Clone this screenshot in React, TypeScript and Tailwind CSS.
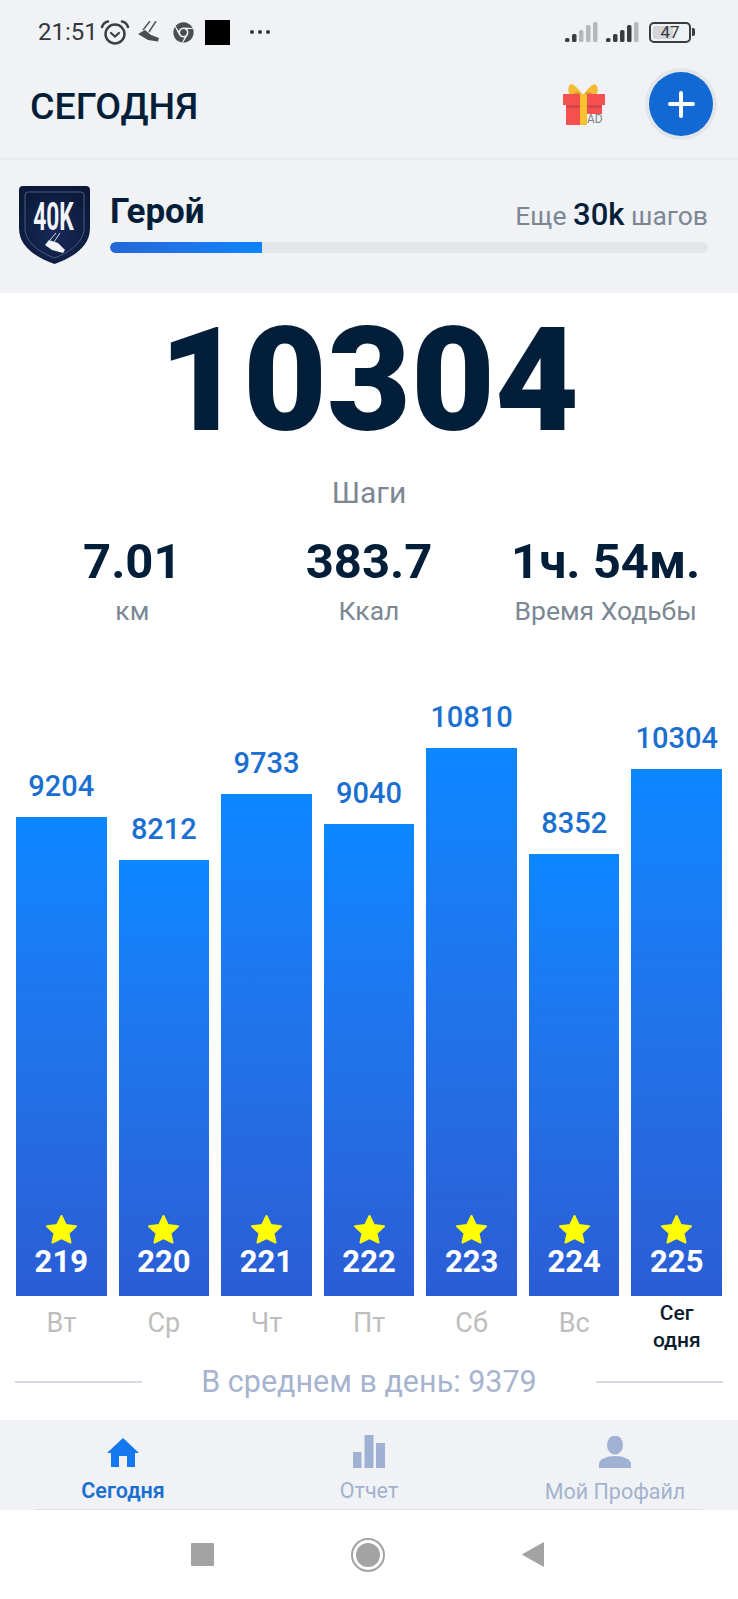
import { FaChrome } from "react-icons/fa"

const days = [
  { steps: "9204", height: "h-[479px]", stars: "219", day: "Вт" },
  { steps: "8212", height: "h-[436px]", stars: "220", day: "Ср" },
  { steps: "9733", height: "h-[502px]", stars: "221", day: "Чт" },
  { steps: "9040", height: "h-[472px]", stars: "222", day: "Пт" },
  { steps: "10810", height: "h-[548px]", stars: "223", day: "Сб" },
  { steps: "8352", height: "h-[442px]", stars: "224", day: "Вс" },
  { steps: "10304", height: "h-[527px]", stars: "225", day: "" },
]

const stats = [
  { value: "7.01", label: "км" },
  { value: "383.7", label: "Ккал" },
  { value: "1ч. 54м.", label: "Время Ходьбы" },
]

const barHeights = [4, 8, 12, 17, 20]

const Signal = ({ dark }: { dark: number }) => (
  <svg width="33" height="20" viewBox="0 0 33 20">
    {barHeights.map((h, i) => (
      <rect
        key={i}
        x={i * 7}
        y={20 - h}
        width="4.5"
        height={h}
        rx="1.5"
        fill={i < dark ? "#3a3d40" : "#b4b8bd"}
      />
    ))}
  </svg>
)

const StatusBar = () => (
  <div className="h-[64px] flex items-center justify-between pl-[38px] pr-[43px] text-[#35383b]">
    <div className="flex items-center">
      <span className="text-[24px] leading-none w-[62px]">21:51</span>
      <svg width="30" height="25" viewBox="0 0 30 25" fill="none" stroke="#3d4043" strokeLinecap="round">
        <circle cx="15" cy="14" r="9.5" strokeWidth="2.5" />
        <path d="M2 7 C3 4 5 2 8 1.5 M28 7 C27 4 25 2 22 1.5" strokeWidth="2.6" />
        <path d="M11 13 L15 16.5 L19 13" strokeWidth="2.2" />
      </svg>
      <svg className="ml-[8px]" width="22" height="22" viewBox="0 0 22 22" fill="none">
        <path d="M18 0 L11 11 M12 0 L5 9" stroke="#55585b" strokeWidth="1.5" />
        <path d="M0 13 L7 9 L13 14 L21 17 L20 20.5 L10 19 Z" fill="#4a4d50" />
      </svg>
      <FaChrome className="ml-[13px] w-[21px] h-[21px] text-[#4c4f52]" />
      <div className="ml-[11px] w-[25px] h-[25px] bg-black" />
      <div className="ml-[20px] flex gap-[4px]">
        <div className="w-[4px] h-[4px] rounded-full bg-[#35383b]" />
        <div className="w-[4px] h-[4px] rounded-full bg-[#35383b]" />
        <div className="w-[4px] h-[4px] rounded-full bg-[#35383b]" />
      </div>
    </div>
    <div className="flex items-center">
      <Signal dark={2} />
      <div className="ml-[8px]">
        <Signal dark={4} />
      </div>
      <div className="ml-[10px] relative w-[42px] h-[21px] rounded-[5px] border-2 border-[#3a3d40] flex items-center justify-center overflow-hidden">
        <div className="absolute left-[2px] top-[2px] bottom-[2px] w-[20px] bg-[#d3d5d8] rounded-[2px]" />
        <span className="relative text-[17px] leading-none">47</span>
      </div>
      <div className="w-[3px] h-[8px] ml-[1px] bg-[#3a3d40] rounded-r-[2px]" />
    </div>
  </div>
)

const Gift = () => (
  <div className="relative w-[42px] h-[41px]">
    <svg width="42" height="41" viewBox="0 0 42 41">
      <path d="M20 12 C16 5 12 1 8 0 C4 3 5 8 7 11 Z" fill="#f6bb35" />
      <path d="M20 12 C24 5 28 1 32 0 C36 3 35 8 33 11 Z" fill="#f6bb35" />
      <path d="M10 11 C12 7 16 7 20 11 Z" fill="#dd9a2b" />
      <path d="M30 11 C28 7 24 7 20 11 Z" fill="#dd9a2b" />
      <rect x="3" y="20" width="36" height="21" fill="#f4504f" />
      <rect x="0" y="10" width="42" height="11" fill="#f4504f" />
      <rect x="3" y="21" width="36" height="3" fill="#d94547" />
      <rect x="17" y="10" width="7" height="31" fill="#f9c22e" />
      <rect x="24" y="30" width="18" height="11" fill="#f0f2f6" />
    </svg>
    <span className="absolute left-[24px] top-[29px] text-[12px] leading-[13px] text-[#7f8388]">AD</span>
  </div>
)

const Badge = () => (
  <svg width="71" height="78" viewBox="0 0 71 78" className="shrink-0">
    <defs>
      <radialGradient id="badge" cx="0.5" cy="0.6" r="0.6">
        <stop offset="0" stopColor="#17295a" />
        <stop offset="1" stopColor="#0b1a38" />
      </radialGradient>
    </defs>
    <path d="M4 0 H67 Q71 0 71 4 V42 C71 62 52 72 35.5 78 C19 72 0 62 0 42 V4 Q0 0 4 0 Z" fill="url(#badge)" />
    <path
      d="M9 6 H62 Q65 6 65 9 V42 C65 57 49 67 35.5 72 C22 67 6 57 6 42 V9 Q6 6 9 6 Z"
      fill="none"
      stroke="#4a5a80"
      strokeWidth="1"
    />
    <text
      transform="translate(34.5 44) scale(0.6 1)"
      textAnchor="middle"
      fontSize="38"
      fontWeight="700"
      fill="#f2f4f7"
      fontFamily="Roboto, sans-serif"
    >
      40K
    </text>
    <path d="M41 47 L35 56 M37 47 L31 54" stroke="#d9dde5" strokeWidth="1" />
    <path d="M26 59 L30 54 L39 57 L46 64 L44 67 L33 64 Z" fill="#f2f4f7" />
  </svg>
)

const Star = () => (
  <svg width="33" height="30" viewBox="0 0 33 30">
    <path
      d="M16.5 2 L20.8 11 L31 12.3 L23.5 19.2 L25.5 28.5 L16.5 24 L7.5 28.5 L9.5 19.2 L2 12.3 L12.2 11 Z"
      fill="#ffff00"
      stroke="#ffff00"
      strokeWidth="2"
      strokeLinejoin="round"
    />
  </svg>
)

const BottomNav = () => (
  <div className="h-[90px] bg-[#f0f2f5] shrink-0">
    <div className="grid grid-cols-3 h-[89px]">
      <div className="flex flex-col items-center pt-[18px]">
        <svg width="32" height="29" viewBox="0 0 32 29">
          <path d="M16 0 L32 15 L28 15 L28 29 L20 29 L20 18 L12 18 L12 29 L4 29 L4 15 L0 15 Z" fill="#1479ee" />
        </svg>
        <span className="mt-[11px] text-[21.5px] leading-[26px] font-semibold text-[#1a6fd0]">Сегодня</span>
      </div>
      <div className="flex flex-col items-center pt-[15px]">
        <svg width="32" height="33" viewBox="0 0 32 33">
          <rect x="0" y="17" width="8.5" height="16" fill="#9fb2d3" />
          <rect x="11.5" y="0" width="9" height="33" fill="#9fb2d3" />
          <rect x="23" y="8" width="9" height="25" fill="#9fb2d3" />
        </svg>
        <span className="mt-[10px] text-[21.5px] leading-[26px] text-[#a3b3cf]">Отчет</span>
      </div>
      <div className="flex flex-col items-center pt-[16px]">
        <svg width="32" height="32" viewBox="0 0 32 32">
          <ellipse cx="16" cy="9" rx="8" ry="9.5" fill="#9fb2d3" />
          <path d="M0 32 V28 C0 23 8 20 16 20 C24 20 32 23 32 28 V32 Z" fill="#9fb2d3" />
        </svg>
        <span className="mt-[11px] text-[21.5px] leading-[26px] text-[#a3b3cf]">Мой Профайл</span>
      </div>
    </div>
    <div className="mx-[35px] h-px bg-[#dfe3e8]" />
  </div>
)

const SystemBar = () => (
  <div className="h-[89px] shrink-0 bg-white flex items-center justify-center gap-[137px] pr-[3px]">
    <div className="w-[23px] h-[23px] bg-[#a3a3a3] rounded-[1px]" />
    <div className="w-[34px] h-[34px] rounded-full border-[2.5px] border-[#a3a3a3] flex items-center justify-center">
      <div className="w-[24px] h-[24px] rounded-full bg-[#a3a3a3]" />
    </div>
    <svg width="22" height="25" viewBox="0 0 22 25">
      <path d="M22 1 V24 Q22 25 21 24.5 L0.5 13 Q0 12.5 0.5 12 L21 0.5 Q22 0 22 1 Z" fill="#a3a3a3" />
    </svg>
  </div>
)

export default function App() {
  return (
    <div className="w-[738px] h-[1599px] flex flex-col bg-white overflow-hidden font-['Roboto',sans-serif] text-[#031e38]">
      <div className="bg-[#f0f2f6] shrink-0">
        <StatusBar />
        <div className="h-[96px] flex items-center justify-between pl-[30px] pr-[21px] pb-[14px] border-b-2 border-[#e9ebef]">
          <h1 className="text-[37.5px] leading-none font-medium mt-[6px]">СЕГОДНЯ</h1>
          <div className="flex items-center">
            <Gift />
            <div className="ml-[40px] w-[72px] h-[72px] rounded-full bg-[#e2e6eb] flex items-center justify-center">
              <div className="w-[64px] h-[64px] rounded-full bg-[#1269d3] flex items-center justify-center relative">
                <div className="w-[27px] h-[4px] bg-white rounded-full" />
                <div className="absolute w-[4px] h-[27px] bg-white rounded-full" />
              </div>
            </div>
          </div>
        </div>
        <div className="h-[133px] flex items-start pl-[19px] pr-[30px] pt-[26px]">
          <Badge />
          <div className="ml-[20px] flex-1">
            <div className="flex items-center justify-between h-[56px]">
              <span className="text-[35px] leading-none font-bold -mt-[6px]">Герой</span>
              <span className="text-[26.5px] leading-none text-[#7c8794]">
                Еще <span className="text-[31px] font-medium text-[#031e38]">30k</span> шагов
              </span>
            </div>
            <div className="h-[11px] rounded-full bg-[#e4e6e9] overflow-hidden">
              <div className="h-full w-[152px] rounded-l-full bg-gradient-to-r from-[#2567d8] to-[#0a84ff]" />
            </div>
          </div>
        </div>
      </div>

      <div className="flex-1 flex flex-col">
        <div className="text-center text-[145px] leading-[145px] font-black mt-[15px]">10304</div>
        <div className="text-center text-[30px] leading-[36px] text-[#7c8794] mt-[22px]">Шаги</div>
        <div className="grid grid-cols-3 px-[14px] mt-[23px]">
          {stats.map((s) => (
            <div key={s.label} className="flex flex-col items-center">
              <span className="text-[49px] leading-[56px] font-bold whitespace-nowrap">{s.value}</span>
              <span className="text-[26.5px] leading-[32px] text-[#7c8794] mt-[5px]">{s.label}</span>
            </div>
          ))}
        </div>

        <div className="flex-1 flex items-end gap-[12px] px-[16px]">
          {days.map((d) => (
            <div key={d.stars} className="flex-1 flex flex-col items-center">
              <span className="text-[29px] leading-[34px] font-medium text-[#1a6fd0] mb-[14px]">{d.steps}</span>
              <div
                className={`${d.height} w-full flex flex-col items-center justify-end pb-[17px] bg-gradient-to-b from-[#0a87ff] to-[#2a5dd5]`}
              >
                <Star />
                <span className="text-[31px] leading-[34px] font-bold text-white mt-[1px]">{d.stars}</span>
              </div>
              <div className="h-[64px] flex flex-col items-center justify-center">
                {d.day ? (
                  <span className="text-[27px] leading-none text-[#bdbdbd] -mt-[10px]">{d.day}</span>
                ) : (
                  <span className="text-[21px] leading-[27px] font-medium text-center text-[#0b1b2e] -mt-[2px]">
                    Сег
                    <br />
                    одня
                  </span>
                )}
              </div>
            </div>
          ))}
        </div>

        <div className="h-[60px] flex items-center px-[15px] pb-[16px] box-border">
          <div className="w-[127px] h-[2px] bg-[#d5dae3]" />
          <span className="flex-1 text-center text-[30.5px] leading-none text-[#a6b4cf]">В среднем в день: 9379</span>
          <div className="w-[127px] h-[2px] bg-[#d5dae3]" />
        </div>
      </div>

      <BottomNav />
      <SystemBar />
    </div>
  )
}
